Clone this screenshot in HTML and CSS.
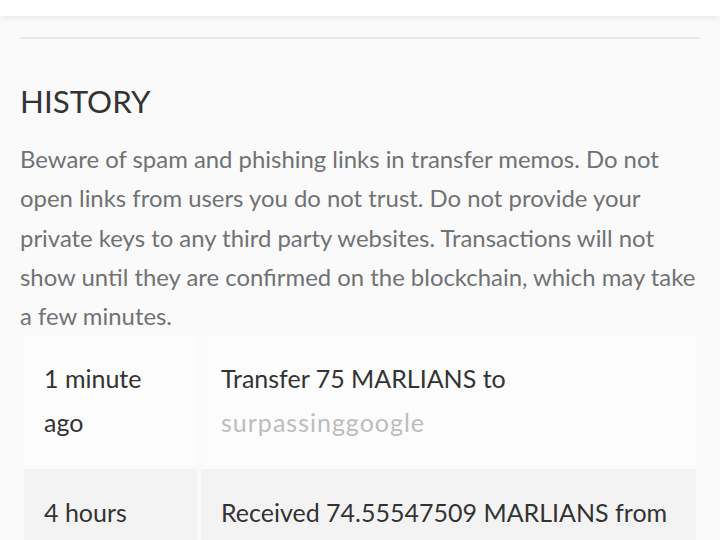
FILE: index.html
```html
<!DOCTYPE html>
<html lang="en">
<head>
  <meta charset="UTF-8">
  <meta name="viewport" content="width=device-width, initial-scale=1.0">
  <title>History</title>
  <link rel="stylesheet" href="styles.css">
</head>
<body>
  <div class="topbar"></div>

  <div class="content">
    <div class="divider"></div>

    <h2 class="section-title">HISTORY</h2>
    <p class="notice">Beware of spam and phishing links in transfer memos. Do not open links from users you do not trust. Do not provide your private keys to any third party websites. Transactions will not show until they are confirmed on the blockchain, which may take a few minutes.</p>

    <table class="history">
      <colgroup>
        <col class="col-time">
        <col>
      </colgroup>
      <tr>
        <td>1 minute ago</td>
        <td>Transfer 75 MARLIANS to <a class="account" href="#">surpassinggoogle</a></td>
      </tr>
      <tr>
        <td>4 hours ago</td>
        <td>Received 74.55547509 MARLIANS from <a class="account" href="#">surpassinggoogle</a></td>
      </tr>
    </table>
  </div>
</body>
</html>
```

FILE: styles.css
```css
body {
  margin: 0;
  background: #fafafa;
  font-family: Lato, "Noto Sans", sans-serif;
  color: #333;
}
.topbar {
  height: 16px;
  background: #fff;
  box-shadow: 0 2px 6px rgba(0, 0, 0, 0.08);
  position: relative;
}
.content {
  padding: 0 20px;
}
.divider {
  padding-top: 21px;
  border-bottom: 2px solid #e9e9e9;
}
.section-title {
  margin: 42px 0 0;
  font-size: 31.3px;
  font-weight: 400;
  line-height: 40px;
  color: #333;
}
.notice {
  margin: 18px 0 0;
  font-size: 23.9px;
  line-height: 39.3px;
  color: #707274;
}
.history {
  width: 100%;
  border-collapse: separate;
  border-spacing: 4px;
  table-layout: fixed;
  margin-top: -4px;
}
.col-time {
  width: 173px;
}
.history td {
  padding: 21px 20px;
  font-size: 25px;
  line-height: 44px;
  vertical-align: top;
  background: #fcfcfc;
}
.history td:first-child {
  padding-right: 28px;
}
.history tr:nth-child(even) td {
  background: #f3f3f3;
}
.account {
  color: #bdbdbd;
  text-decoration: none;
  letter-spacing: 1px;
}
```
